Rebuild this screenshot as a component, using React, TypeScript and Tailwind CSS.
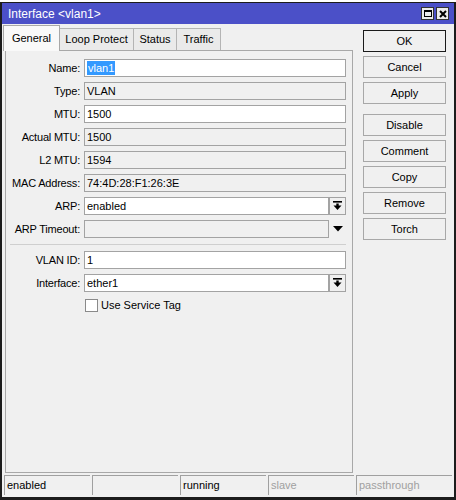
import React from "react";

const font = { fontFamily: '"Liberation Sans", Arial, sans-serif' };

function DropIcon() {
  return (
    <svg width="9" height="10" viewBox="0 0 9 10">
      <rect x="0" y="0" width="9" height="1.6" fill="#000" />
      <rect x="3.3" y="2.5" width="2.4" height="2.5" fill="#000" />
      <polygon points="0.5,4.6 8.5,4.6 4.5,9" fill="#000" />
    </svg>
  );
}

function Field({
  value,
  editable,
  selected,
  dropdown,
  arrow,
}: {
  value?: string;
  editable?: boolean;
  selected?: boolean;
  dropdown?: boolean;
  arrow?: boolean;
}) {
  const box = (
    <div
      className={`h-[18px] flex-1 flex items-center border border-[#a3a3a3] pl-[2px] text-[11px] text-black ${
        editable ? "bg-white" : "bg-[#f0f0f0]"
      }`}
    >
      {selected ? <span className="bg-[#3399ff] text-white px-[1px] leading-[14px]">{value}</span> : value}
    </div>
  );
  return (
    <div className="flex items-center">
      {box}
      {dropdown && (
        <div className="w-[17px] h-[18px] border border-[#a3a3a3] bg-[#f0f0f0] flex items-center justify-center">
          <DropIcon />
        </div>
      )}
      {arrow && (
        <div className="w-[17px] h-[18px] flex items-center justify-center">
          <svg width="10" height="6" viewBox="0 0 10 6">
            <polygon points="0,0 10,0 5,5.5" fill="#000" />
          </svg>
        </div>
      )}
    </div>
  );
}

function Row({ label, children }: { label: string; children: React.ReactNode }) {
  return (
    <div className="grid grid-cols-[74px_1fr] gap-x-[4px] items-center">
      <div className="text-right text-[11px] text-black tracking-[-0.2px]">{label}:</div>
      {children}
    </div>
  );
}

function Btn({ label, focused }: { label: string; focused?: boolean }) {
  return (
    <div
      className={`h-[22px] flex items-center justify-center text-[11px] text-black bg-[#f0f0f0] border ${
        focused ? "border-[#1a1a1a]" : "border-[#a8a8a8]"
      }`}
    >
      {label}
    </div>
  );
}

const tabs = [
  { name: "General", w: "w-[57px]", active: true },
  { name: "Loop Protect", w: "w-[74px]" },
  { name: "Status", w: "w-[43px]" },
  { name: "Traffic", w: "w-[44px]" },
];

export default function App() {
  return (
    <div className="w-[456px] h-[500px] bg-white pt-[2px] flex flex-col" style={font}>
      <div className="flex-1 flex flex-col border-x-2 border-b-[3px] border-t border-[#1c1c1c] bg-[#f0f0f0]">
        {/* title bar */}
        <div className="h-[21px] bg-[#4b50c8] flex items-center justify-between pl-[6px] pr-[5px]">
          <span className="text-white text-[12px]">Interface &lt;vlan1&gt;</span>
          <div className="flex gap-[2px]">
            <div className="w-[13px] h-[13px] bg-[#ececec] border border-[#333] flex items-center justify-center">
              <div className="w-[8px] h-[7px] border border-black border-t-2" />
            </div>
            <div className="w-[13px] h-[13px] bg-[#ececec] border border-[#333] flex items-center justify-center">
              <svg width="8" height="8" viewBox="0 0 8 8">
                <path d="M1 1 L7 7 M7 1 L1 7" stroke="#000" strokeWidth="2" />
              </svg>
            </div>
          </div>
        </div>

        {/* main area */}
        <div className="flex-1 flex">
          <div className="w-[351px] flex flex-col">
            <div className="h-[26px] flex items-end pl-[1px]">
              {tabs.map((t) =>
                t.active ? (
                  <div
                    key={t.name}
                    className={`${t.w} h-[26px] -mb-px relative z-10 bg-[#f9f9f9] border border-b-0 border-[#a8a8a8] flex items-center justify-center text-[11px] text-black`}
                  >
                    {t.name}
                  </div>
                ) : (
                  <div
                    key={t.name}
                    className={`${t.w} h-[22px] bg-[#eaeaea] border border-l-0 border-b-0 border-[#b4b4b4] flex items-center justify-center text-[11px] text-black`}
                  >
                    {t.name}
                  </div>
                )
              )}
            </div>
            <div className="flex-1 ml-[3px] border border-[#a8a8a8] bg-[#f0f0f0] pt-[8px] pr-[6px] flex flex-col">
              <div className="flex flex-col gap-[5px]">
                <Row label="Name">
                  <Field value="vlan1" editable selected />
                </Row>
                <Row label="Type">
                  <Field value="VLAN" />
                </Row>
                <Row label="MTU">
                  <Field value="1500" editable />
                </Row>
                <Row label="Actual MTU">
                  <Field value="1500" />
                </Row>
                <Row label="L2 MTU">
                  <Field value="1594" />
                </Row>
                <Row label="MAC Address">
                  <Field value="74:4D:28:F1:26:3E" />
                </Row>
                <Row label="ARP">
                  <Field value="enabled" editable dropdown />
                </Row>
                <Row label="ARP Timeout">
                  <Field arrow />
                </Row>
              </div>
              <div className="h-px bg-[#cfcfcf] my-[6px] ml-[4px]" />
              <div className="flex flex-col gap-[5px]">
                <Row label="VLAN ID">
                  <Field value="1" editable />
                </Row>
                <Row label="Interface">
                  <Field value="ether1" editable dropdown />
                </Row>
              </div>
              <div className="flex items-center mt-[5px] pl-[79px] gap-[3px]">
                <div className="w-[13px] h-[13px] bg-white border border-[#8a8a8a]" />
                <span className="text-[11px] text-black">Use Service Tag</span>
              </div>
            </div>
          </div>

          {/* action buttons */}
          <div className="w-[83px] ml-[10px] mt-[6px] flex flex-col gap-[4px]">
            <Btn label="OK" focused />
            <Btn label="Cancel" />
            <Btn label="Apply" />
            <div className="h-[2px]" />
            <Btn label="Disable" />
            <Btn label="Comment" />
            <Btn label="Copy" />
            <Btn label="Remove" />
            <Btn label="Torch" />
          </div>
        </div>

        {/* status bar */}
        <div className="h-[20px] mt-[2px] mb-[2px] flex gap-[2px] px-[2px]">
          {[
            { t: "enabled", c: "text-black" },
            { t: "", c: "" },
            { t: "running", c: "text-black" },
            { t: "slave", c: "text-[#a0a0a0]" },
            { t: "passthrough", c: "text-[#a0a0a0]" },
          ].map((s, i) => (
            <div
              key={i}
              className={`${i === 4 ? "flex-1" : "w-[86px]"} border-t border-l border-[#a0a0a0] pl-[2px] flex items-center text-[11px] ${s.c}`}
            >
              {s.t}
            </div>
          ))}
        </div>
      </div>
    </div>
  );
}
